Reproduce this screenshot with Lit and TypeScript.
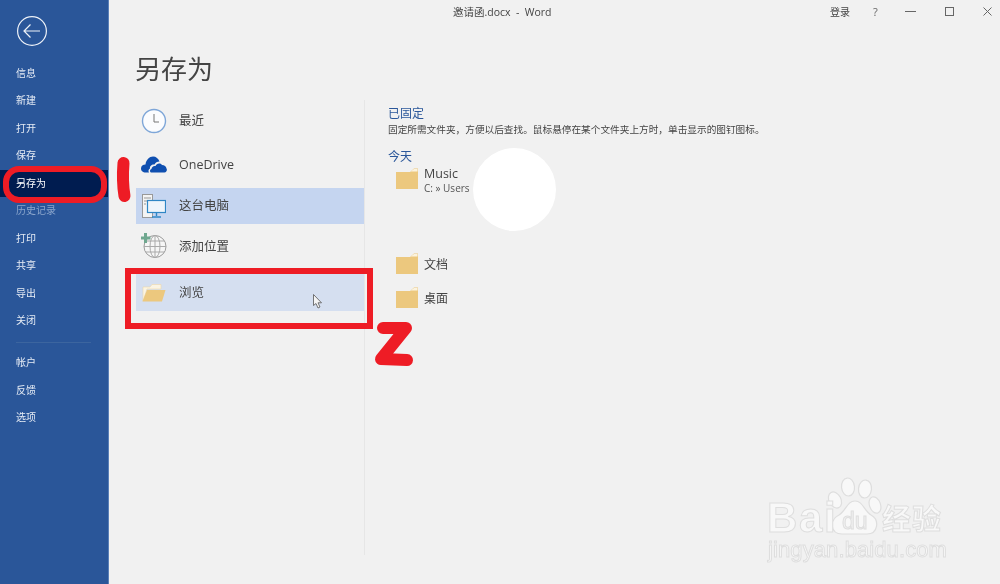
import { LitElement, html, css, svg } from "lit";
import { customElement } from "lit/decorators.js";

const folder = html`<svg class="folder" viewBox="0 0 22 21" width="22" height="21">
  <path d="M0 4 L14 4 L18 0.5 L22 0.5 L22 21 L0 21 Z" fill="#ecc87e"/>
  <path d="M14.5 3.5 L18 1 L21.5 1 L21.5 3.5 Z" fill="#fbf3df"/>
</svg>`;

const paw = svg`
  <ellipse cx="9" cy="24" rx="6" ry="8.5" transform="rotate(-28 9 24)"/>
  <ellipse cx="22" cy="11" rx="6.5" ry="9" transform="rotate(-6 22 11)"/>
  <ellipse cx="39" cy="13" rx="6.5" ry="9" transform="rotate(6 39 13)"/>
  <ellipse cx="49" cy="29" rx="5.5" ry="8.5" transform="rotate(-20 49 29)"/>
  <path d="M29 25 C37 25 38 35 45 39 C54 44 52 58 41 58 L16 58 C4 58 3 44 13 39 C20 35 21 25 29 25 Z"/>`;

@customElement("app-root")
export class AppRoot extends LitElement {
  static styles = css`
    :host {
      display: flex;
      position: relative;
      width: 1000px;
      height: 584px;
      overflow: hidden;
      background: #f1f1f1;
      font-family: "Open Sans", "Noto Sans CJK SC", sans-serif;
      color: #444;
      filter: blur(0.35px);
    }
    aside {
      width: 108px;
      flex: none;
      background: #2a5699;
      border-right: 1px solid #5a80b8;
      display: flex;
      flex-direction: column;
      color: #e6ecf5;
      font-size: 10px;
    }
    .back { margin: 16px 0 13.75px 17px; width: 30px; height: 30px; display: block; }
    .nav { height: 27.5px; line-height: 27.5px; padding-left: 16px; flex: none; }
    .nav.on { background: #001c50; color: #fff; }
    .nav.dim { color: #8ba6cc; }
    .sep { height: 1px; background: #3c659f; margin: 7px 17px 6.25px 16px; }
    main { flex: 1; display: flex; flex-direction: column; min-width: 0; }
    .titlebar { height: 24px; padding-bottom: 1px; box-sizing: border-box; display: flex; align-items: center; font-size: 10.5px; color: #444; white-space: nowrap; }
    .doc { margin-left: 344px; white-space: pre; }
    .ctl { margin-left: auto; display: flex; align-items: center; }
    .login { width: 20px; margin-right: 23px; font-size: 10px; }
    .q { width: 10px; margin-right: 22px; color: #666; font-size: 11px; }
    .ctl svg { display: block; }
    .page-title { margin: 25px 0 0 26px; font-size: 26px; line-height: 40px; color: #444; font-weight: 400; height: 40px; }
    .body { display: flex; margin: 11px 0 29px 27px; flex: 1; }
    .left { width: 228px; border-right: 1px solid #e6e6e6; display: flex; flex-direction: column; font-size: 12.5px; color: #444; }
    .row { height: 37px; flex: none; display: flex; align-items: center; }
    .row .ic { width: 36px; display: flex; justify-content: center; flex: none; }
    .row span { margin-left: 7px; }
    .r1 { margin-top: 1px; }
    .r1 svg { margin-top: 2px; }
    .r2 { margin-top: 8px; }
    .r3 { margin-top: 5px; background: #c5d5f0; height: 36px; }
    .r3 span { padding-bottom: 3px; }
    .r4 { margin-top: 1px; height: 40px; }
    .r5 { margin-top: 9px; background: #d5dff0; }
    .r5 span { padding-bottom: 2px; }
    .right { padding-left: 23px; display: flex; flex-direction: column; }
    h3 { margin: 0; font-weight: 400; font-size: 12px; color: #2b579a; line-height: 16px; }
    .pinned { margin-top: 6px; }
    .desc { font-size: 9.67px; line-height: 16px; color: #444; white-space: nowrap; }
    .today { margin-top: 11px; }
    .file { display: flex; align-items: center; padding-left: 8px; gap: 6px; }
    .music { margin-top: -2px; height: 32px; }
    .music svg { margin-top: -2px; }
    .music b { display: block; font-weight: 400; font-size: 12.5px; line-height: 17px; color: #444; }
    .music i { display: block; font-style: normal; font-size: 10px; line-height: 12px; color: #555; }
    .doc-file { height: 34px; font-size: 12px; }
    .doc-file svg { margin-top: -2px; }
    .gap { margin-top: 52px; }
    .mask { position: absolute; left: 473px; top: 148px; width: 83px; height: 83px; border-radius: 50%; background: #fff; }
    .ring { position: absolute; left: 3px; top: 166px; width: 104px; height: 37px; box-sizing: border-box; border: 6px solid #ee1c25; border-radius: 16px; }
    .box { position: absolute; left: 125px; top: 268px; width: 248px; height: 61px; box-sizing: border-box; border: 6.5px solid #ee1c25; }
    .ink { position: absolute; left: 0; top: 0; pointer-events: none; }
    .cursor { position: absolute; left: 313px; top: 294px; }
    .wm { position: absolute; left: 766px; top: 476px; width: 190px; height: 90px; color: #f8f8f8; -webkit-text-stroke: 1px #dedede; font-family: "Liberation Sans", "Noto Sans CJK SC", sans-serif; }
    .wm div { position: absolute; white-space: nowrap; }
    .wm .bai { left: 1px; top: 20px; font-size: 42px; font-weight: 700; line-height: 44px; letter-spacing: 1.6px; }
    .wm .jy { left: 116px; top: 26px; font-size: 29px; line-height: 36px; font-weight: 700; letter-spacing: 1px; }
    .wm .url { left: 2px; top: 62px; font-size: 22px; line-height: 24px; letter-spacing: 0.1px; }
    .wm svg { position: absolute; left: 60px; top: 0; }
    .wm .du { left: 76px; top: 35px; font-size: 23px; line-height: 20px; color: #f1f1f1; font-weight: 400; }
  `;

  render() {
    const navA = ["信息", "新建", "打开", "保存"];
    const navB = ["打印", "共享", "导出", "关闭"];
    const navC = ["帐户", "反馈", "选项"];
    return html`
      <aside>
        <svg class="back" viewBox="0 0 30 30" fill="none" stroke="#eef2f8" stroke-width="1.2">
          <circle cx="15" cy="15" r="14.4"/>
          <path d="M7 15 H23 M13.5 8.5 L7 15 L13.5 21.5"/>
        </svg>
        ${navA.map((n) => html`<div class="nav">${n}</div>`)}
        <div class="nav on">另存为</div>
        <div class="nav dim">历史记录</div>
        ${navB.map((n) => html`<div class="nav">${n}</div>`)}
        <div class="sep"></div>
        ${navC.map((n) => html`<div class="nav">${n}</div>`)}
      </aside>
      <main>
        <div class="titlebar">
          <span class="doc">邀请函.docx  -  Word</span>
          <div class="ctl">
            <span class="login">登录</span>
            <span class="q">?</span>
            <svg width="11" height="11" viewBox="0 0 11 11" style="margin-right:29px"><path d="M0 5.5H11" stroke="#666" stroke-width="1"/></svg>
            <svg width="9" height="9" viewBox="0 0 9 9" style="margin-right:29px"><rect x=".5" y=".5" width="8" height="8" fill="none" stroke="#666"/></svg>
            <svg width="9" height="9" viewBox="0 0 9 9" style="margin-right:8px"><path d="M.5 .5L8.5 8.5M8.5 .5L.5 8.5" stroke="#666"/></svg>
          </div>
        </div>
        <div class="page-title">另存为</div>
        <div class="body">
          <div class="left">
            <div class="row r1"><div class="ic">
              <svg width="26" height="26" viewBox="0 0 26 26"><circle cx="13" cy="13" r="11.5" fill="#fbfcfe" stroke="#7ea6d8" stroke-width="1.4"/><path d="M13 6V14H18" fill="none" stroke="#777" stroke-width="1"/></svg>
            </div><span>最近</span></div>
            <div class="row r2"><div class="ic">
              <svg width="26" height="17" viewBox="0 0 26 17"><path d="M5 16.5C1.5 16.5 0 14.5 0 12.5C0 10 2 8.5 4.5 8.5C5 4 8.5 .5 12 .5C15 .5 17.5 2.5 18.5 5.5C16 5.5 14.5 6.5 13.5 8.5C11 8 8.5 10 9 12.5C7.5 13 7 15 8 16.5Z" fill="#0f4fb0"/><path d="M10.5 16.5C8.5 16.5 8.5 13.5 10.5 13C10.5 11 12.5 9.5 14.5 10C15.5 7.5 19 6.5 21 9C23.5 9 25 10.5 25.5 12.5C26.5 14 25.5 16.5 23.5 16.5Z" fill="#0f4fb0"/></svg>
            </div><span>OneDrive</span></div>
            <div class="row r3"><div class="ic">
              <svg width="24" height="24" viewBox="0 0 24 24"><rect x=".5" y=".5" width="10" height="23" fill="#f4f4f4" stroke="#999"/><path d="M2 4H9M2 7H9M2 10H4" stroke="#999"/><rect x="5.5" y="6.5" width="18" height="12" fill="#eef5fb" stroke="#2f86c5" stroke-width="1.2"/><path d="M14.5 19V22M10 23H19" stroke="#2f86c5" stroke-width="1.4"/></svg>
            </div><span>这台电脑</span></div>
            <div class="row r4"><div class="ic">
              <svg width="26" height="25" viewBox="0 0 26 25"><circle cx="14" cy="13.5" r="11" fill="#f6f6f6" stroke="#999"/><ellipse cx="14" cy="13.5" rx="5" ry="11" fill="none" stroke="#aaa"/><path d="M3 13.5H25M4.5 8H23.5M4.5 19H23.5M14 2.5V24.5" stroke="#aaa"/><path d="M4.5 0V10M0 5H9.5" stroke="#6fa78f" stroke-width="3"/></svg>
            </div><span>添加位置</span></div>
            <div class="row r5"><div class="ic">
              <svg width="24" height="18" viewBox="0 0 24 18"><path d="M1 17V3H8L10 .5H19V5H5Z" fill="#fbf4e3" stroke="#efd9a8" stroke-width=".6"/><path d="M5 6H23.5L20 17.5H0.5Z" fill="#ecc87e"/></svg>
            </div><span>浏览</span></div>
          </div>
          <div class="right">
            <h3 class="pinned">已固定</h3>
            <div class="desc">固定所需文件夹，方便以后查找。鼠标悬停在某个文件夹上方时，单击显示的图钉图标。</div>
            <h3 class="today">今天</h3>
            <div class="file music">${folder}<div><b>Music</b><i>C: » Users</i></div></div>
            <div class="file doc-file gap">${folder}<span>文档</span></div>
            <div class="file doc-file">${folder}<span>桌面</span></div>
          </div>
        </div>
      </main>
      <div class="mask"></div>
      <div class="ring"></div>
      <div class="box"></div>
      <svg class="ink" width="1000" height="584" fill="none" stroke="#ee1c25" stroke-linecap="round" stroke-linejoin="round">
        <path d="M123.5 163 C122.5 175 123 187 124.5 196" stroke-width="12"/>
        <path d="M383 328 L406 328 L381 359 L407 360" stroke-width="12"/>
      </svg>
      <svg class="cursor" width="11" height="15" viewBox="0 0 11 15"><path d="M.5 .5V11.5L3 9.5L5 14L7 13L5 8.8H8.5Z" fill="#f4f4f4" stroke="#555" stroke-width=".8"/></svg>
      <div class="wm">
        <svg width="66" height="60" viewBox="0 0 66 60" fill="#f8f8f8" stroke="#dedede" stroke-width="1.2">${paw}</svg>
        <div class="bai">Bai</div>
        <div class="du">du</div>
        <div class="jy">经验</div>
        <div class="url">jingyan.baidu.com</div>
      </div>
    `;
  }
}
